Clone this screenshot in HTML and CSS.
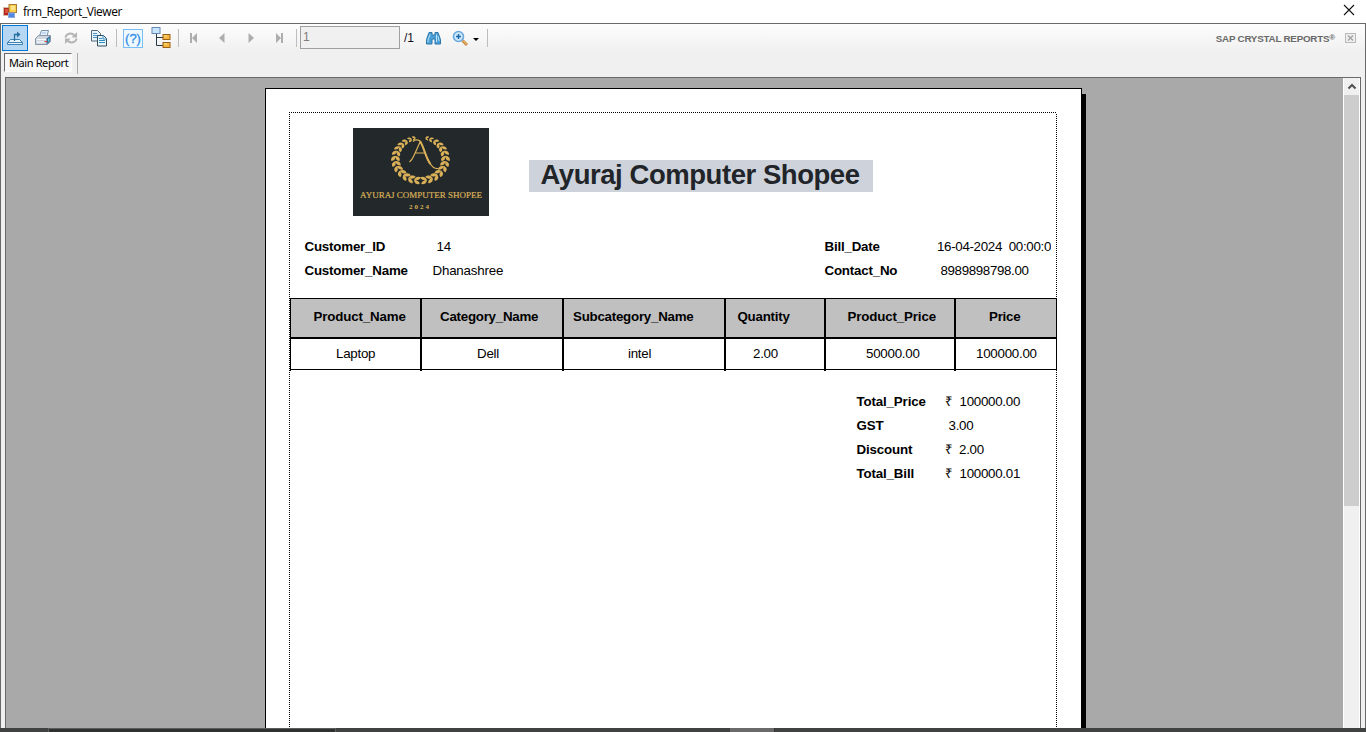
FILE: index.html
```html
<!DOCTYPE html>
<html lang="en">
<head>
<meta charset="utf-8">
<title>frm_Report_Viewer</title>
<link rel="stylesheet" href="styles.css">
</head>
<body>
<div class="window">
  <header class="titlebar">
    <svg class="app-icon" width="14" height="15" viewBox="0 0 14 15"><rect x=".5" y="3.500" width="6" height="8" fill="#b3261b" stroke="#d6b9a9"/><rect x="2" y="5" width="3" height="4" fill="#d8543f"/><rect x="6" y=".5" width="7.500" height="8" fill="#f8cd47" stroke="#a87a35"/><rect x="8" y="2" width="4" height="4" fill="#ffe38a"/><rect x="5.500" y="9" width="6" height="4.500" fill="#4f86e8" stroke="#8aa9dd"/></svg>
    <span class="caption">frm_Report_Viewer</span>
    <svg class="close" width="12" height="12" viewBox="0 0 12 12"><path d="M1 1 11 11M11 1 1 11" stroke="#111" stroke-width="1.1"/></svg>
  </header>
  <main class="viewer">
    <div class="toolbar">
      <div class="slot"><div class="pressed">
        <svg width="18" height="18" viewBox="0 0 18 18"><path d="M4.500 10.500 1.500 13.500v2h15v-2l-3-3zM1.500 13.500h15" fill="#e8f4fc" stroke="#3c82b4"/><path d="M8.500 12V5.500H13" fill="none" stroke="#276f9f" stroke-width="1.300"/><path d="M11 2.500 14.500 5.500 11 8.500z" fill="#276f9f"/></svg>
      </div></div>
      <div class="slot"><svg width="18" height="18" viewBox="0 0 18 18"><path d="M5.500 7 7.500 1.500h7L13 7z" fill="#e7f0fb" stroke="#7792ac"/><path d="M8 4h4" stroke="#9dbbe2"/><path d="m1.500 9.500 3-3h12v6l-3 3h-12z" fill="#ced7e0" stroke="#8795a5"/><path d="M12.500 9.500 16 7v5.500l-3.500 3z" fill="#3f679a"/><path d="M3 10.500h9M3 13h7" stroke="#fff"/><path d="M14 9.500h1.500v3H14z" fill="#50c9dc"/><path d="M10.500 12.500H13" stroke="#de4d37"/></svg></div>
      <div class="slot"><svg width="14" height="14" viewBox="0 0 14 14"><g fill="none" stroke="#b4b4b4" stroke-width="2"><path d="M1.500 6.500c.5-4 6-5.500 9-2"/><path d="M12.500 7.500c-.5 4-6 5.500-9 2"/></g><path d="M13 1v5.500H7.500zM1 13V7.500h5.500z" fill="#b4b4b4"/></svg></div>
      <div class="slot"><svg width="18" height="18" viewBox="0 0 18 18"><path d="M1.500 1.500h6l3 3v7.500h-9z" fill="#e9f5fd" stroke="#51697c"/><path d="M3 4.500h4M3 6.500h5M3 8.500h5" stroke="#4a93c2"/><path d="M7.500 6.500h6l3 3v7.500h-9z" fill="#e9f5fd" stroke="#334f63"/><path d="M13 6.500v3.500h3.500M9 9.500h3M9 11.500h6M9 13.500h6" fill="none" stroke="#348bbe"/></svg></div>
      <i class="sep"></i>
      <div class="slot"><div class="help">(?)</div></div>
      <div class="slot"><svg width="20" height="22" viewBox="0 0 20 22"><path d="M5.500 7v11.500H12M5.500 10.500H12" fill="none" stroke="#263746"/><rect x="1" y=".5" width="8" height="6" fill="#c9e4ff" stroke="#6487ad"/><rect x="12" y="7.500" width="7" height="5" fill="#f5b83d" stroke="#9c6119"/><rect x="12" y="15.500" width="7" height="5" fill="#f5b83d" stroke="#9c6119"/><path d="M13 9h3M13 17h3" stroke="#ffe8a0"/></svg></div>
      <i class="sep"></i>
      <div class="slot"><svg class="first" width="10" height="10" viewBox="0 0 10 10"><path d="M1 0h2v10H1zM8 0v10L3 5z" fill="#adadad"/></svg></div>
      <div class="slot"><svg class="first" width="8" height="10" viewBox="0 0 8 10"><path d="M6.500 0v10L1 5z" fill="#adadad"/></svg></div>
      <div class="slot"><svg width="8" height="10" viewBox="0 0 8 10"><path d="M1.500 0v10L7 5z" fill="#adadad"/></svg></div>
      <div class="slot"><svg width="10" height="10" viewBox="0 0 10 10"><path d="M7 0h2v10H7zM2 0v10l5-5z" fill="#adadad"/></svg></div>
      <i class="sep"></i>
      <div class="page-input">1</div>
      <span class="page-count">/1</span>
      <div class="slot"><svg width="15" height="14" viewBox="0 0 15 14"><path d="M3 1.500h3V4h3V1.500h3l2.500 7v4.500H9V8H6v5H.5V8.500z" fill="#4ba0d6" stroke="#2c76aa"/><path d="M4 3.500 2 9v2.500M10.500 3.500V11M12 5l1 5" fill="none" stroke="#b9e1f7"/></svg></div>
      <div class="zoom"><svg width="17" height="17" viewBox="0 0 17 17"><path d="m10.500 10.500 4.500 4.500" stroke="#c98a3d" stroke-width="3"/><path d="m11 10.500 4 4" stroke="#f7cd90"/><circle cx="6.500" cy="6.500" r="5" fill="#cfe9fb" stroke="#69a8dc" stroke-width="1.600"/><path d="M6.500 4v5M4 6.500h5" stroke="#1b6aac" stroke-width="1.500"/></svg><b class="caret"></b></div>
      <i class="sep"></i>
      <div class="brand">SAP CRYSTAL REPORTS<sup>®</sup></div>
      <svg class="tab-close" width="11" height="10" viewBox="0 0 11 10"><rect x=".5" y=".5" width="10" height="9" fill="#eee" stroke="#b9b9b9"/><path d="m3 2.500 5 5m0-5-5 5" stroke="#a3a3a3" stroke-width="1.400"/></svg>
    </div>
    <div class="tabs"><div class="tab">Main Report</div></div>
    <div class="canvas">
      <div class="sheet-wrap">
        <article class="sheet">
          <div class="margins">
            <div class="masthead">
              <svg class="logo" width="136" height="88" viewBox="0 0 136 88">
                <defs>
                  <g id="leaf"><path d="M0 3C-4.600 2-4.800-1-4-3.300-1-2.700.2-.6 0 3ZM0 3C4.600 2 4.800-1 4-3.300 1-2.700-.2-.6 0 3Z"/></g>
                  <g id="branch">
                    <use href="#leaf" transform="rotate(98) translate(25)"/>
                    <use href="#leaf" transform="rotate(112) translate(25)"/>
                    <use href="#leaf" transform="rotate(126) translate(25)"/>
                    <use href="#leaf" transform="rotate(140) translate(25)"/>
                    <use href="#leaf" transform="rotate(154) translate(25)"/>
                    <use href="#leaf" transform="rotate(168) translate(25)"/>
                    <use href="#leaf" transform="rotate(182) translate(25)"/>
                    <use href="#leaf" transform="rotate(196) translate(25) scale(.95)"/>
                    <use href="#leaf" transform="rotate(209) translate(25) scale(.9)"/>
                    <use href="#leaf" transform="rotate(221) translate(25) scale(.82)"/>
                    <use href="#leaf" transform="rotate(233) translate(25) scale(.75)"/>
                    <use href="#leaf" transform="rotate(245) translate(25) scale(.65)"/>
                    <use href="#leaf" transform="rotate(255) translate(25) scale(.55)"/>
                  </g>
                </defs>
                <rect width="136" height="88" fill="#23282b"/>
                <g fill="#d9b057" transform="translate(67.500 31) scale(1 .86)">
                  <use href="#branch"/><use href="#branch" transform="scale(-1 1)"/>
                </g>
                <path d="M56.500 34Q59 32 61 27.500L67.500 13M60 13.500Q63 10.500 67 13C71 19 73 31 77.500 36Q80.500 41 85 40.500M62 25h10" fill="none" stroke="#d9b057" stroke-width="1.200"/>
                <path d="M67 13C71 19 73 31 77.500 36" fill="none" stroke="#d9b057" stroke-width="2"/>
                <text class="logo-name" x="68" y="69.500" textLength="122" lengthAdjust="spacingAndGlyphs">AYURAJ COMPUTER SHOPEE</text>
                <text class="logo-year" x="66" y="80.500" textLength="20">2024</text>
              </svg>
              <h1 class="shop">Ayuraj Computer Shopee</h1>
            </div>
            <section class="info">
              <b>Customer_ID</b><span class="in-id">14</span><b>Bill_Date</b><span class="date">16-04-2024&nbsp; 00:00:0</span>
              <b>Customer_Name</b><span>Dhanashree</span><b>Contact_No</b><span class="in-phone">8989898798.00</span>
            </section>
            <section class="items">
              <div class="th c1">Product_Name</div><div class="th c2">Category_Name</div><div class="th c3">Subcategory_Name</div><div class="th c4">Quantity</div><div class="th c5">Product_Price</div><div class="th c6">Price</div>
              <div class="td d1">Laptop</div><div class="td d2">Dell</div><div class="td d3">intel</div><div class="td d4">2.00</div><div class="td d5">50000.00</div><div class="td d6">100000.00</div>
            </section>
            <section class="totals">
              <b>Total_Price</b><span>₹</span><span>100000.00</span>
              <b>GST</b><span class="gst">3.00</span>
              <b>Discount</b><span>₹</span><span class="disc">2.00</span>
              <b>Total_Bill</b><span>₹</span><span>100000.01</span>
            </section>
          </div>
        </article>
        <div class="shade"></div>
      </div>
      <div class="scroll"><div class="up"><svg width="10" height="7" viewBox="0 0 10 7"><path d="M1.500 5.500 5 2l3.500 3.500" fill="none" stroke="#505050" stroke-width="2"/></svg></div><div class="thumb"></div></div>
    </div>
  </main>
  <footer class="desktop"><i class="d-left"></i><i class="d-mid"></i></footer>
</div>
</body>
</html>
```
FILE: styles.css
```css
* { box-sizing: border-box; }
body { margin: 0; overflow: hidden; font-family: "Liberation Sans", Arial, sans-serif; background: #fff; }
svg { display: block; flex: none; }
.window { width: 1366px; height: 732px; display: flex; flex-direction: column; overflow: hidden; }
.titlebar { height: 23px; display: flex; align-items: center; padding: 0 11px 0 3px; flex: none; }
.caption { font: 12px/16px "Open Sans", "Noto Sans", sans-serif; letter-spacing: -.43px; margin: 1px 0 0 6px; flex: 1; color: #000; }
.close { margin-top: -3px; }
.viewer { height: 705px; border: 1px solid #696969; border-bottom: 0; background: #f0f0f0; display: flex; flex-direction: column; }
.toolbar { height: 28px; display: flex; align-items: center; background: linear-gradient(#fdfdfd, #f0f0f0); flex: none; }
.slot { width: 28px; height: 28px; display: flex; align-items: center; justify-content: center; flex: none; }
.pressed { width: 26px; height: 26px; border: 1px solid #0078d7; background: #b5d7f3; display: flex; align-items: center; justify-content: center; }
.first { margin-right: 2px; }
.sep { width: 6px; height: 18px; flex: none; background: linear-gradient(#bdbdbd, #bdbdbd) 3px 0 / 1px 18px no-repeat; }
.help { width: 20px; height: 19px; border: 1px solid #79bdf5; background: #f0f8ff; color: #2e8fe6; font: 13px/17px "Liberation Sans", sans-serif; -webkit-text-stroke: .3px #2e8fe6; text-align: center; }
.page-input { width: 100px; height: 23px; border: 1px solid #a0a0a0; background: #f0f0f0; margin: -1px 0 0 1px; padding-left: 2px; color: #7d7d7d; font-size: 12px; line-height: 20px; }
.page-count { width: 19px; padding-left: 4px; font-size: 12px; color: #101020; }
.zoom { width: 37px; display: flex; align-items: center; padding-left: 5px; gap: 4px; }
.caret { border: 3.500px solid transparent; border-top-color: #000; border-bottom: 0; margin-top: 2px; }
.brand { margin-left: auto; font: bold 9.800px/14px "Liberation Sans", sans-serif; letter-spacing: -.22px; color: #696969; margin-top: 2px; white-space: nowrap; }
.brand sup { font-size: 8px; line-height: 0; vertical-align: 2px; }
.tab-close { margin: 0 9px 0 10px; }
.tabs { height: 25px; padding: 1px 0 0 3px; flex: none; }
.tab { width: 74px; height: 21px; position: relative; border-right: 1px solid #aaa; padding: 0 0 0 5px; font: 11px/19px "Noto Sans", sans-serif; letter-spacing: -.4px; white-space: nowrap; isolation: isolate; }
.tab::before { content: ""; position: absolute; inset: 0 5px 2px 0; border: 1px solid #fff; border-top-color: #696969; border-left-color: #696969; background: #f8f8f8; z-index: -1; }
.canvas { margin: 0 4px; flex: 1; min-height: 0; border: 1px solid #696969; border-bottom: 0; background: #a9a9a9; display: flex; overflow: hidden; }
.sheet-wrap { flex: 1; display: flex; padding: 10px 0 0 259px; }
.sheet { width: 816px; border: 1px solid #000; border-width: 1px 0 0 1px; background: #fff; padding: 23px 0 0 23px; }
.shade { width: 5px; background: linear-gradient(90deg, #000 1px, transparent 1px) 0 0 / 5px 6px no-repeat, linear-gradient(#000, #000) 0 6px no-repeat; }
.margins { width: 768px; height: 617px; padding: 0 0 0 1px; background: repeating-linear-gradient(90deg, #000 0 1px, #fff 1px 2px) 0 0 / 768px 1px no-repeat, repeating-linear-gradient(#000 0 1px, #fff 1px 2px) 0 0 / 1px 100% no-repeat, repeating-linear-gradient(#000 0 1px, #fff 1px 2px) 767px 0 / 1px 100% no-repeat; }
.masthead { display: flex; padding: 16px 0 0 63px; gap: 40px; height: 122px; }
.logo-name, .logo-year { fill: #d9b057; font-family: "Liberation Serif", serif; text-anchor: middle; }
.logo-name { font-size: 9px; stroke: #d9b057; stroke-width: .2px; }
.logo-year { font-size: 7px; font-weight: bold; }
.shop { width: 344px; height: 32px; margin: 32px 0 0; padding-right: 2px; background: #ced3db; color: #212529; font-size: 27.500px; letter-spacing: -.45px; line-height: 29px; text-align: center; white-space: nowrap; }
.info { display: grid; grid-template-columns: 128px 392px 112px 114px; grid-auto-rows: 24px; padding: 1px 0 0 14.500px; height: 64px; font-size: 13.333px; letter-spacing: -.2px; line-height: 24px; color: #000; }
.in-id { padding-left: 4px; }
.in-phone { padding-left: 4px; letter-spacing: -.35px; }
.date { overflow: hidden; white-space: nowrap; letter-spacing: -.32px; padding-left: .5px; }
.items { display: grid; grid-template: 41px 32px / 132px 142px 162px 100px 130px 101px; width: 767px; height: 73px; font-size: 13.333px; letter-spacing: -.25px; }
.th { background: #c0c0c0; border: solid #000; border-width: 1px 2px 2px 0; font-weight: bold; line-height: 36px; }
.td { border-right: 2px solid #000; line-height: 29px; background: linear-gradient(#000, #000) 0 30px / 100% 1px no-repeat; }
.c1, .d1 { border-left: 1px solid #000; }
.c6, .d6 { border-right-width: 1px; }
.c1 { padding-left: 22.500px; } .c2 { padding-left: 18px; } .c3 { padding-left: 9px; } .c4 { padding-left: 11.500px; } .c5 { padding-left: 21.500px; } .c6 { padding-left: 33px; }
.c1, .c5 { letter-spacing: -.15px; }
.d1 { padding-left: 45px; } .d2 { padding-left: 55px; } .d3 { padding-left: 64px; } .d4 { padding-left: 27px; } .d5 { padding-left: 40px; } .d6 { padding-left: 20px; }
.totals { display: grid; grid-template-columns: 88px 15px 80px; grid-auto-rows: 24px; margin: 19px 0 0 566.500px; font-size: 13.333px; letter-spacing: -.15px; line-height: 24px; }
.totals span { letter-spacing: -.27px; }
.gst { grid-column: 2 / 4; padding-left: 4px; }
.disc { margin-left: -.500px; }
.scroll { width: 17px; background: #f0f0f0; border: solid #fff; border-width: 0 1px; flex: none; }
.up { height: 17px; display: flex; align-items: center; justify-content: center; }
.thumb { height: 411px; background: #cdcdcd; }
.desktop { height: 4px; flex: none; background: #404141; display: flex; }
.d-left { width: 288px; margin-left: 48px; background: #2f3030; border: solid #5c5c5c; border-width: 1px 1px 0; }
.d-mid { width: 45px; margin-left: 394px; background: #6a6a6a; border-right: 1px solid #333; }
```
